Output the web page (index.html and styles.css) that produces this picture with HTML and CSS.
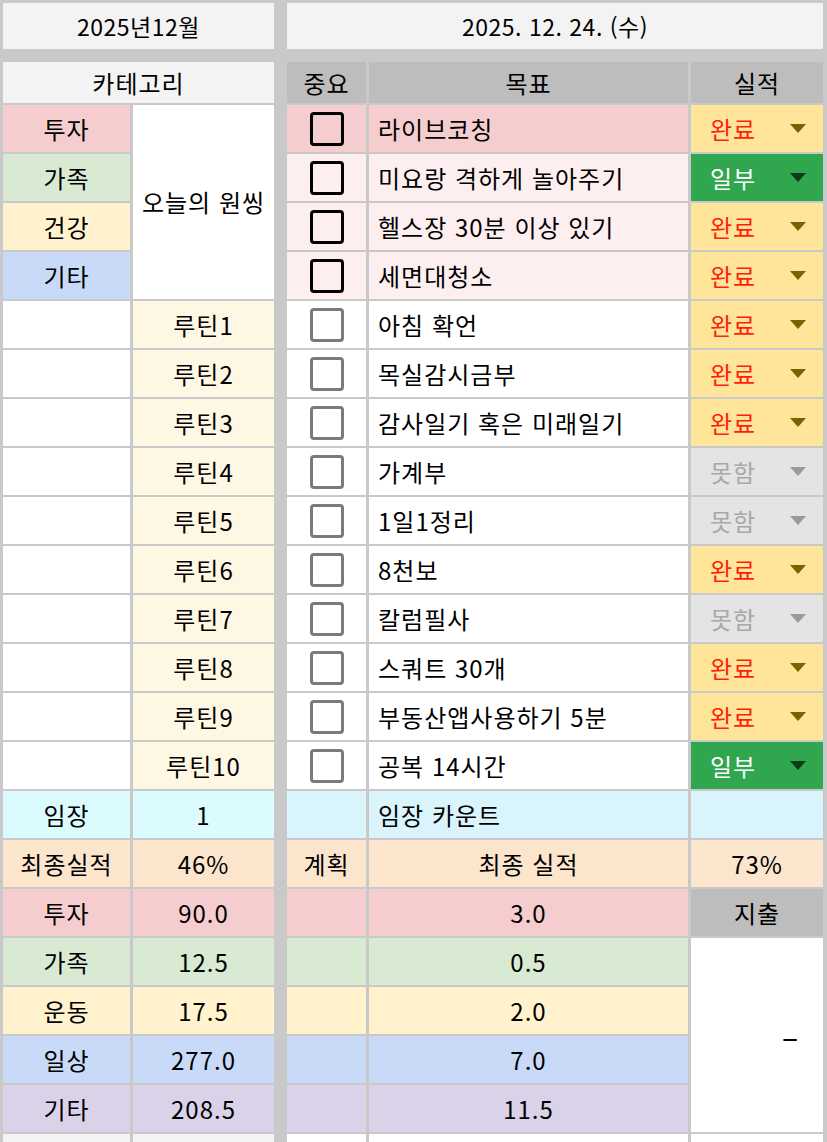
FILE: index.html
```html
<!DOCTYPE html>
<html lang="ko">
<head>
<meta charset="utf-8">
<title>2025년12월</title>
<link rel="stylesheet" href="styles.css">
</head>
<body>
<div class="sheet">
  <div class="col col-left">
    <div class="title">2025년12월</div>
    <div class="grid grid-left">
      <div class="c span2 bg-hl">카테고리</div>

      <div class="c bg-red">투자</div>
      <div class="c rspan4 bg-w">오늘의 원씽</div>
      <div class="c bg-grn">가족</div>
      <div class="c bg-yel">건강</div>
      <div class="c bg-blu">기타</div>

      <div class="c bg-w"></div><div class="c bg-cream">루틴1</div>
      <div class="c bg-w"></div><div class="c bg-cream">루틴2</div>
      <div class="c bg-w"></div><div class="c bg-cream">루틴3</div>
      <div class="c bg-w"></div><div class="c bg-cream">루틴4</div>
      <div class="c bg-w"></div><div class="c bg-cream">루틴5</div>
      <div class="c bg-w"></div><div class="c bg-cream">루틴6</div>
      <div class="c bg-w"></div><div class="c bg-cream">루틴7</div>
      <div class="c bg-w"></div><div class="c bg-cream">루틴8</div>
      <div class="c bg-w"></div><div class="c bg-cream">루틴9</div>
      <div class="c bg-w"></div><div class="c bg-cream">루틴10</div>

      <div class="c bg-cyan">임장</div><div class="c bg-cyan">1</div>
      <div class="c bg-peach">최종실적</div><div class="c bg-peach">46%</div>
      <div class="c bg-red">투자</div><div class="c bg-red">90.0</div>
      <div class="c bg-grn">가족</div><div class="c bg-grn">12.5</div>
      <div class="c bg-yel">운동</div><div class="c bg-yel">17.5</div>
      <div class="c bg-blu">일상</div><div class="c bg-blu">277.0</div>
      <div class="c bg-pur">기타</div><div class="c bg-pur">208.5</div>
      <div class="c bg-hl"></div><div class="c bg-hl"></div>
    </div>
  </div>

  <div class="col col-right">
    <div class="title">2025. 12. 24. (수)</div>
    <div class="grid grid-right">
      <div class="c bg-hd">중요</div>
      <div class="c bg-hd">목표</div>
      <div class="c bg-hd">실적</div>

      <div class="c bg-red"><span class="cb"></span></div>
      <div class="c left-al bg-red">라이브코칭</div>
      <div class="c st st-done">완료<span class="tri"></span></div>

      <div class="c bg-redl"><span class="cb"></span></div>
      <div class="c left-al bg-redl">미요랑 격하게 놀아주기</div>
      <div class="c st st-part">일부<span class="tri"></span></div>

      <div class="c bg-redl"><span class="cb"></span></div>
      <div class="c left-al bg-redl">헬스장 30분 이상 있기</div>
      <div class="c st st-done">완료<span class="tri"></span></div>

      <div class="c bg-redl"><span class="cb"></span></div>
      <div class="c left-al bg-redl">세면대청소</div>
      <div class="c st st-done">완료<span class="tri"></span></div>

      <div class="c bg-w"><span class="cb cb-gray"></span></div>
      <div class="c left-al bg-w">아침 확언</div>
      <div class="c st st-done">완료<span class="tri"></span></div>

      <div class="c bg-w"><span class="cb cb-gray"></span></div>
      <div class="c left-al bg-w">목실감시금부</div>
      <div class="c st st-done">완료<span class="tri"></span></div>

      <div class="c bg-w"><span class="cb cb-gray"></span></div>
      <div class="c left-al bg-w">감사일기 혹은 미래일기</div>
      <div class="c st st-done">완료<span class="tri"></span></div>

      <div class="c bg-w"><span class="cb cb-gray"></span></div>
      <div class="c left-al bg-w">가계부</div>
      <div class="c st st-no">못함<span class="tri"></span></div>

      <div class="c bg-w"><span class="cb cb-gray"></span></div>
      <div class="c left-al bg-w">1일1정리</div>
      <div class="c st st-no">못함<span class="tri"></span></div>

      <div class="c bg-w"><span class="cb cb-gray"></span></div>
      <div class="c left-al bg-w">8천보</div>
      <div class="c st st-done">완료<span class="tri"></span></div>

      <div class="c bg-w"><span class="cb cb-gray"></span></div>
      <div class="c left-al bg-w">칼럼필사</div>
      <div class="c st st-no">못함<span class="tri"></span></div>

      <div class="c bg-w"><span class="cb cb-gray"></span></div>
      <div class="c left-al bg-w">스쿼트 30개</div>
      <div class="c st st-done">완료<span class="tri"></span></div>

      <div class="c bg-w"><span class="cb cb-gray"></span></div>
      <div class="c left-al bg-w">부동산앱사용하기 5분</div>
      <div class="c st st-done">완료<span class="tri"></span></div>

      <div class="c bg-w"><span class="cb cb-gray"></span></div>
      <div class="c left-al bg-w">공복 14시간</div>
      <div class="c st st-part">일부<span class="tri"></span></div>

      <div class="c bg-cyan2"></div>
      <div class="c left-al bg-cyan2">임장 카운트</div>
      <div class="c bg-cyan2"></div>

      <div class="c bg-peach">계획</div>
      <div class="c bg-peach">최종 실적</div>
      <div class="c bg-peach">73%</div>

      <div class="c bg-red"></div>
      <div class="c bg-red">3.0</div>
      <div class="c bg-hd">지출</div>

      <div class="c bg-grn"></div>
      <div class="c bg-grn">0.5</div>
      <div class="c rspan4 bg-w dash">–</div>

      <div class="c bg-yel"></div>
      <div class="c bg-yel">2.0</div>

      <div class="c bg-blu"></div>
      <div class="c bg-blu">7.0</div>

      <div class="c bg-pur"></div>
      <div class="c bg-pur">11.5</div>

      <div class="c bg-w"></div>
      <div class="c bg-w"></div>
      <div class="c bg-w"></div>
    </div>
  </div>
</div>
</body>
</html>
```

FILE: styles.css
```css
* { box-sizing: border-box; }
html, body { margin: 0; padding: 0; }
body {
  background: #c9c9c9;
  font-family: "Noto Sans CJK KR", "Noto Sans", sans-serif;
  color: #000;
}
.sheet {
  display: flex;
  align-items: flex-start;
  gap: 13px;
  padding: 3px 0 0 3px;
  width: 827px;
  height: 1142px;
  overflow: hidden;
}
.col {
  display: flex;
  flex-direction: column;
  gap: 13px;
  flex-shrink: 0;
}
.col > * { flex-shrink: 0; }
.col-left { width: 271px; }
.col-right { width: 536px; }
.title {
  height: 46px;
  background: #f3f3f3;
  display: flex;
  align-items: center;
  justify-content: center;
  font-size: 23px;
  font-weight: 400;
  line-height: 1;
  letter-spacing: 0.5px;
}
.grid {
  display: grid;
  grid-template-rows: 41px;
  grid-auto-rows: 47px;
  row-gap: 2px;
  column-gap: 3px;
}
.grid-left { grid-template-columns: 127px 141px; }
.grid-right { grid-template-columns: 79px 319px 132px; }
.c {
  display: flex;
  align-items: center;
  justify-content: center;
  font-size: 24px;
  font-weight: 400;
  line-height: 1;
  white-space: nowrap;
  overflow: hidden;
  letter-spacing: 1px;
}
.span2 { grid-column: span 2; }
.rspan4 { grid-row: span 4; }
.left-al { justify-content: flex-start; padding-left: 9px; }

.bg-hl { background: #f3f3f3; }
.bg-hd { background: #bdbdbd; }
.bg-w { background: #ffffff; }
.bg-red { background: #f6cdce; }
.bg-redl { background: #fdeff0; }
.bg-grn { background: #d9ead3; }
.bg-yel { background: #fff2cc; }
.bg-blu { background: #c9daf8; }
.bg-pur { background: #dad2e9; }
.bg-cream { background: #fef7e3; }
.bg-cyan { background: #dcfbff; }
.bg-cyan2 { background: #d9f4fb; }
.bg-peach { background: #fce5cd; }

.cb {
  display: block;
  width: 34px;
  height: 34px;
  border: 3.5px solid #000;
  border-radius: 4px;
}
.cb-gray { border-width: 3px; border-color: #7a7a7a; }

.st {
  justify-content: space-between;
  padding: 0 17px 0 19px;
}
.tri {
  width: 0;
  height: 0;
  border-left: 8px solid transparent;
  border-right: 8px solid transparent;
  border-top: 9px solid #7f6000;
}
.st-done { background: #ffe599; color: #ff1f0a; }
.st-part { background: #30a74f; color: #ffffff; }
.st-part .tri { border-top-color: #0d3a1b; }
.st-no { background: #e4e4e4; color: #a8a8a8; }
.st-no .tri { border-top-color: #9a9a9a; }

.dash {
  justify-content: flex-end;
  padding-right: 24px;
  font-size: 30px;
}
```
